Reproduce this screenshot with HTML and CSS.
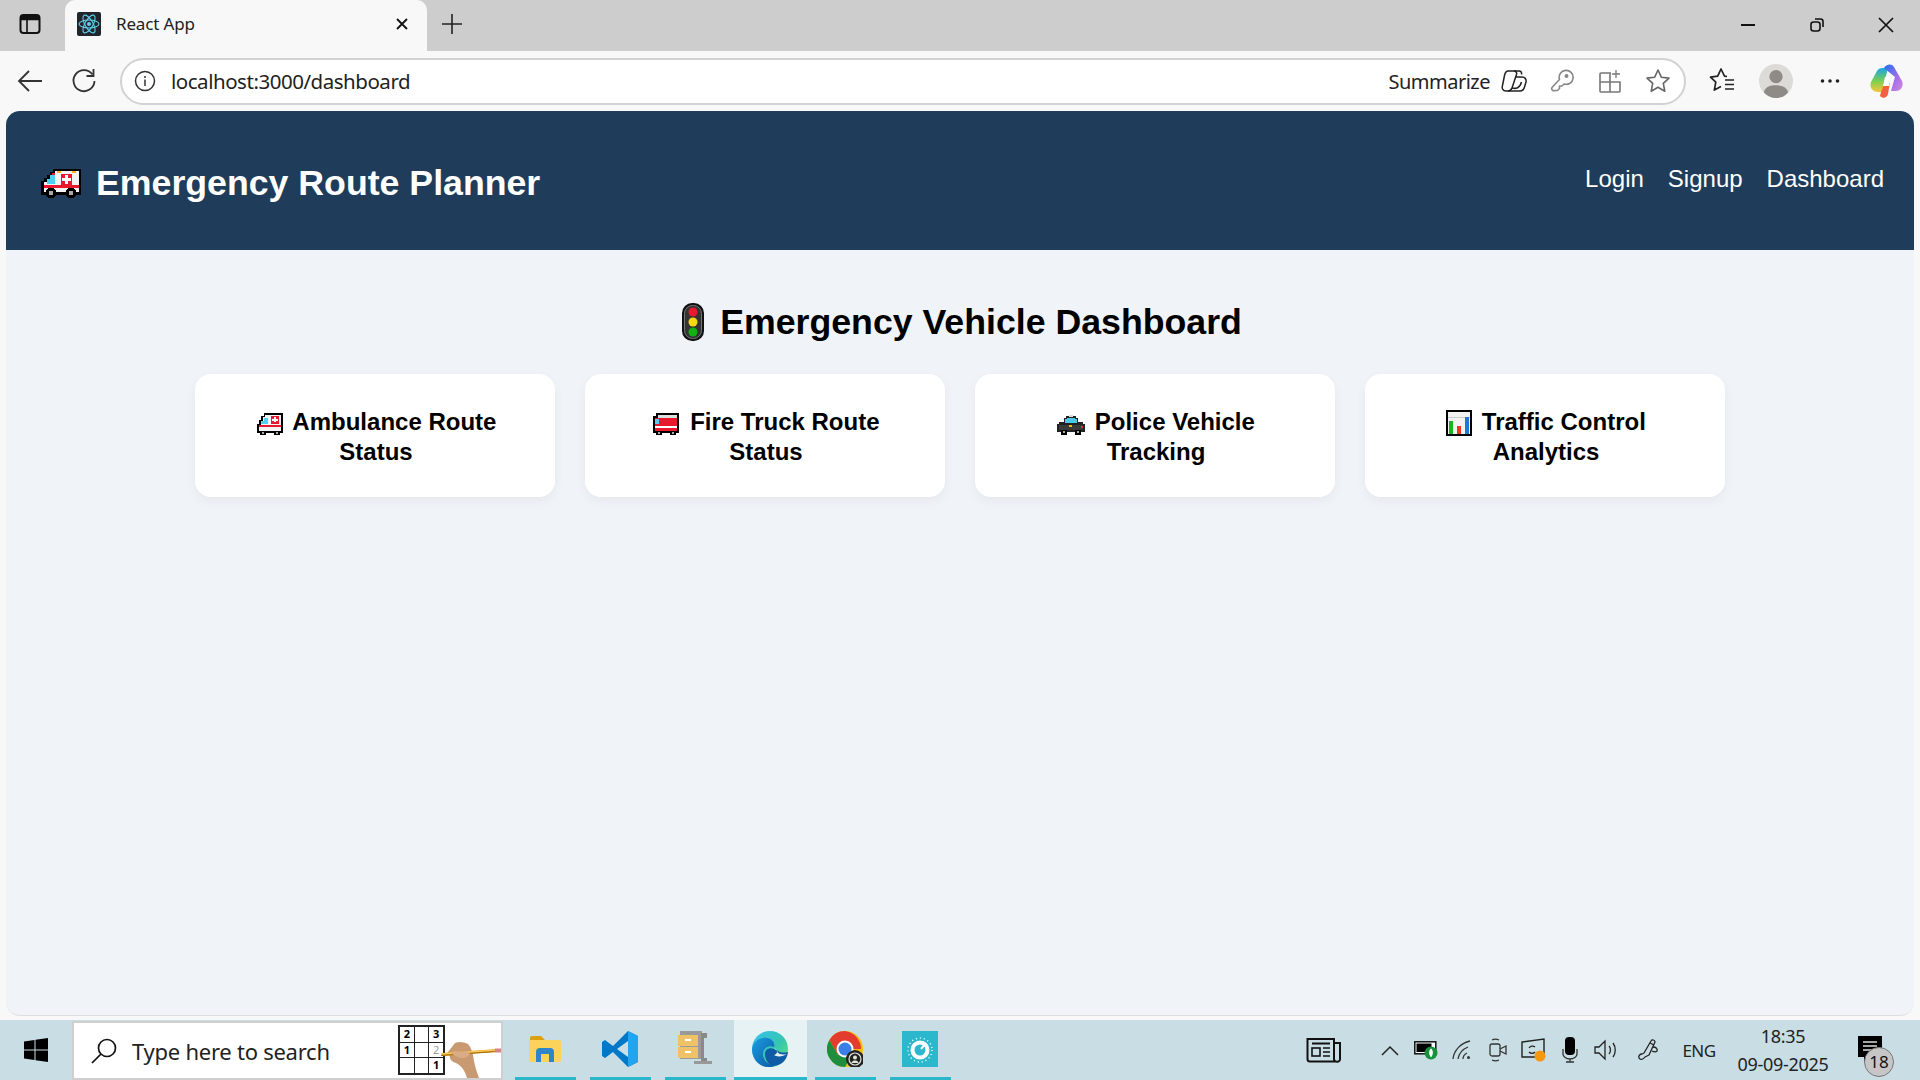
FILE: index.html
```html
<!DOCTYPE html>
<html lang="en">
<head>
<meta charset="utf-8">
<title>React App</title>
<link rel="stylesheet" href="styles.css">
</head>
<body>
<div class="screen">
  <div class="tabstrip">
    <div class="slot panel-slot">
      <svg width="22" height="22" viewBox="0 0 22 22" fill="none" stroke="#111" stroke-width="2"><rect x="1.5" y="2" width="19" height="18" rx="3"/><path d="M2 6.5h18M8 6.5V20" stroke-width="1.6"/><path d="M2 4.5h18" stroke-width="3.5"/></svg>
    </div>
    <div class="tab">
      <svg class="favicon" width="24" height="24" viewBox="0 0 24 24"><rect width="24" height="24" rx="2" fill="#20262b"/><g fill="none" stroke="#5fd0ee" stroke-width="1.1"><ellipse cx="12" cy="12" rx="10" ry="4"/><ellipse cx="12" cy="12" rx="10" ry="4" transform="rotate(60 12 12)"/><ellipse cx="12" cy="12" rx="10" ry="4" transform="rotate(120 12 12)"/></g><circle cx="12" cy="12" r="2" fill="#5fd0ee"/></svg>
      <span class="tab-title">React App</span>
      <svg class="tab-close" width="14" height="14" viewBox="0 0 14 14" stroke="#111" stroke-width="1.8"><path d="M2 2l10 10M12 2L2 12"/></svg>
    </div>
    <div class="slot plus-slot">
      <svg width="22" height="22" viewBox="0 0 22 22" stroke="#222" stroke-width="1.6"><path d="M11 1v20M1 11h20"/></svg>
    </div>
    <div class="winctl">
      <div class="slot ctl"><svg width="16" height="16" viewBox="0 0 16 16" stroke="#111" stroke-width="2"><path d="M1 8h14"/></svg></div>
      <div class="slot ctl"><svg width="16" height="16" viewBox="0 0 16 16" fill="none" stroke="#111" stroke-width="1.6"><rect x="2" y="5" width="9" height="9" rx="2.5"/><path d="M6 2h5.5A2.5 2.5 0 0 1 14 4.500V10"/></svg></div>
      <div class="slot ctl"><svg width="16" height="16" viewBox="0 0 16 16" stroke="#111" stroke-width="1.7"><path d="M1 1l14 14M15 1L1 15"/></svg></div>
    </div>
  </div>

  <div class="toolbar">
    <div class="slot nav-slot">
      <svg width="26" height="24" viewBox="0 0 26 24" fill="none" stroke="#333" stroke-width="1.8"><path d="M25 12H2M12 2L2 12l10 10"/></svg>
    </div>
    <div class="slot nav-slot refresh-slot">
      <svg width="26" height="26" viewBox="0 0 26 26" fill="none" stroke="#333" stroke-width="1.8"><path d="M21.500 6.500A10.500 10.500 0 1 0 23.500 13"/><path d="M22.500 1v7h-7"/></svg>
    </div>
    <div class="address">
      <svg class="info" width="22" height="22" viewBox="0 0 22 22" fill="none" stroke="#333" stroke-width="1.5"><circle cx="11" cy="11" r="9.500"/><path d="M11 9.500v6.500M11 6v2"/></svg>
      <span class="url">localhost:3000/dashboard</span>
      <span class="summ">Summarize</span>
      <div class="slot addr-slot"><svg width="26" height="24" viewBox="0 0 26 24" fill="none" stroke="#222" stroke-width="1.5" stroke-linejoin="round"><path d="M7 2h6c2 0 3 1.500 2.500 3.500L11 19c-.7 2-2 3-4 3H5c-3 0-4.500-2.500-3.500-5.500l2-10C4.200 3.500 5 2 7 2z"/><path d="M13 2h5c2 0 3 1.500 2.500 3.500"/><path d="M14 8h7c3 0 4.500 2.500 4 5l-1.500 5c-.7 2.500-2 4-4.500 4H7"/><path d="M11 19c4 1 8 0 9.500-6"/></svg></div>
      <div class="slot addr-slot"><svg width="24" height="24" viewBox="0 0 24 24" fill="none" stroke="#888" stroke-width="1.6" stroke-linejoin="round"><path d="M9.500 10.500a7 7 0 1 1 4.500 4.500l-2 2h-2.500v2.500l-2 2H5c-2 1-4-1-3-3z"/><circle cx="16.500" cy="7" r="1.200" fill="#888"/></svg></div>
      <div class="slot addr-slot"><svg width="24" height="24" viewBox="0 0 24 24" fill="none" stroke="#777" stroke-width="1.6"><path d="M13 4H3a1 1 0 0 0-1 1v17a1 1 0 0 0 1 1h18a1 1 0 0 0 1-1V13H2M12 4v19"/><path d="M18 1v8M14 5h8" stroke-width="1.3"/></svg></div>
      <div class="slot addr-slot"><svg width="26" height="26" viewBox="0 0 26 26" fill="none" stroke="#666" stroke-width="1.6"><path d="M13 2l3.300 7.200 7.700.9-5.700 5.300 1.500 7.800L13 19.300 6.200 23.200l1.500-7.800L2 10.100l7.700-.9z" stroke-linejoin="round"/></svg></div>
    </div>
    <div class="slot tool-slot"><svg width="26" height="26" viewBox="0 0 26 26" fill="none" stroke="#222" stroke-width="1.7"><path d="M18 8.500l-2.500-.3L12 1l-3.300 7.200-7.200.9 5.300 5-1.500 8L12 18.500" stroke-linejoin="round"/><path d="M16 12h9M16 16.500h9M16 21h9" stroke-width="1.500"/></svg></div>
    <div class="slot tool-slot"><svg width="34" height="34" viewBox="0 0 35 35"><circle cx="17.500" cy="17.500" r="17.500" fill="#dcdbd8"/><circle cx="17.500" cy="13" r="6.800" fill="#8e8a85"/><path d="M5 29c2-6 7-7 12.500-7S28 23 30 29c-3 4-8 6-12.500 6S8 33 5 29z" fill="#8e8a85"/></svg></div>
    <div class="slot tool-slot"><svg width="20" height="6" viewBox="0 0 20 6" fill="#222"><circle cx="2.500" cy="3" r="1.800"/><circle cx="10" cy="3" r="1.800"/><circle cx="17.500" cy="3" r="1.800"/></svg></div>
    <div class="slot tool-slot copilot-slot"><svg width="34" height="36" viewBox="0 0 34 36"><defs><linearGradient id="cpa" x1="0" y1="0" x2="0" y2="1"><stop offset="0" stop-color="#19a5e8"/><stop offset=".55" stop-color="#7ed04d"/><stop offset="1" stop-color="#f6c63a"/></linearGradient><linearGradient id="cpb" x1="0" y1="0" x2="1" y2="1"><stop offset="0" stop-color="#1d6ff0"/><stop offset=".6" stop-color="#a56ee8"/><stop offset="1" stop-color="#d58be0"/></linearGradient></defs><path d="M7 8c2-3 4-3 7-3h4l-6 24H8c-5 0-9-4-7-10z" fill="url(#cpa)"/><path d="M14 5c2-4 8-5 10-1l8 14c2 5-1 10-6 10h-5l4-14z" fill="url(#cpb)"/><path d="M11 29l4-10 5 0-2 12c-1 4-5 5-8 2z" fill="#f2613f"/><path d="M15 14h6l-2 9h-6z" fill="#fff"/></svg></div>
  </div>

  <div class="viewport">
    <header class="app-header">
      <h1 class="brand">
        <svg class="emoji brand-emoji" width="40" height="32" viewBox="0 0 40 32" shape-rendering="crispEdges"><path d="M12 2h28v26H0V14h3v-3h3V8h3V5h3z" fill="#000"/><path d="M14 4h24v21H3V15h3v-3h3V9h3V6h2z" fill="#f3f3f3"/><path d="M9 8h5v9H6v-5h3z" fill="#4fcdf2"/><rect x="11" y="6" width="3" height="2" fill="#e8192c"/><rect x="20" y="7" width="11" height="11" fill="#e8192c"/><path d="M24 8h3v3h3v3h-3v3h-3v-3h-3v-3h3z" fill="#fff"/><rect x="3" y="18" width="35" height="3" fill="#e8192c"/><rect x="16" y="4" width="4" height="2" fill="#f3b51f"/><rect x="31" y="4" width="4" height="2" fill="#f3b51f"/><circle cx="10" cy="26" r="5.500" fill="#000"/><circle cx="10" cy="26" r="2.500" fill="#aaa"/><circle cx="30" cy="26" r="5.500" fill="#000"/><circle cx="30" cy="26" r="2.500" fill="#aaa"/></svg>
        <span>Emergency Route Planner</span>
      </h1>
      <nav class="app-nav">
        <a class="nav-link">Login</a>
        <a class="nav-link">Signup</a>
        <a class="nav-link">Dashboard</a>
      </nav>
    </header>
    <main class="dash">
      <h2 class="dash-title">
        <svg class="emoji light-emoji" width="24" height="40" viewBox="0 0 24 40"><rect x="1" y="1" width="22" height="38" rx="10" fill="#111"/><rect x="3.500" y="3.500" width="17" height="33" rx="8" fill="#333" stroke="#777"/><circle cx="12" cy="10" r="4.500" fill="#e8192c"/><circle cx="12" cy="20" r="4.500" fill="#f6d90f"/><circle cx="12" cy="30" r="4.500" fill="#12b012"/></svg>
        <span>Emergency Vehicle Dashboard</span>
      </h2>
      <div class="cards">
        <article class="card"><h3 class="card-title">
          <svg class="emoji card-emoji" width="28" height="24" viewBox="0 0 28 24" shape-rendering="crispEdges"><path d="M8 1h19v20H1v-9h2V8h2V4h3z" fill="#000"/><path d="M9 3h16v16H3v-6h2V9h2V5h2z" fill="#f4f4f4"/><path d="M8 6h4v6H5V9h3z" fill="#56cfee"/><rect x="15" y="4" width="8" height="8" fill="#e8192c"/><path d="M18 5h2v5h-2zM16 7h6v2h-6z" fill="#fff"/><rect x="3" y="13" width="22" height="2" fill="#e8192c"/><rect x="4" y="19" width="6" height="4" fill="#000"/><rect x="18" y="19" width="6" height="4" fill="#000"/><rect x="6" y="20" width="2" height="2" fill="#aaa"/><rect x="20" y="20" width="2" height="2" fill="#aaa"/></svg>
          Ambulance Route Status</h3></article>
        <article class="card"><h3 class="card-title">
          <svg class="emoji card-emoji" width="28" height="24" viewBox="0 0 28 24" shape-rendering="crispEdges"><path d="M4 1h23v20H1V4h3z" fill="#000"/><rect x="3" y="6" width="22" height="13" fill="#e8192c"/><rect x="6" y="3" width="19" height="3" fill="#ddd"/><rect x="3" y="7" width="4" height="5" fill="#56cfee"/><rect x="3" y="14" width="22" height="2" fill="#fff"/><rect x="4" y="19" width="6" height="4" fill="#000"/><rect x="18" y="19" width="6" height="4" fill="#000"/><rect x="6" y="20" width="2" height="2" fill="#aaa"/><rect x="20" y="20" width="2" height="2" fill="#aaa"/></svg>
          Fire Truck Route Status</h3></article>
        <article class="card"><h3 class="card-title">
          <svg class="emoji card-emoji" width="28" height="22" viewBox="0 0 28 22" shape-rendering="crispEdges"><path d="M9 2h10v2h2v4h5v2h2v8H0v-8h2V8h5V4h2z" fill="#222"/><path d="M10 4h8v1h2v4H8V5h2z" fill="#4fc7ea"/><rect x="12" y="1" width="4" height="2" fill="#ddd"/><rect x="2" y="11" width="24" height="5" fill="#3a3a3a"/><rect x="12" y="11" width="3" height="2" fill="#f3b51f"/><rect x="24" y="12" width="2" height="2" fill="#d33"/><rect x="4" y="16" width="6" height="5" fill="#000"/><rect x="18" y="16" width="6" height="5" fill="#000"/><rect x="6" y="17" width="2" height="2" fill="#aaa"/><rect x="20" y="17" width="2" height="2" fill="#aaa"/></svg>
          Police Vehicle Tracking</h3></article>
        <article class="card"><h3 class="card-title">
          <svg class="emoji card-emoji" width="26" height="26" viewBox="0 0 26 26" shape-rendering="crispEdges"><rect x="0" y="0" width="26" height="26" fill="#000"/><rect x="2" y="2" width="22" height="22" fill="#f2f2f2"/><rect x="2" y="7" width="22" height="1" fill="#ccc"/><rect x="3" y="11" width="4" height="13" fill="#19b51f"/><rect x="11" y="16" width="4" height="8" fill="#ea3a1c"/><rect x="19" y="7" width="4" height="17" fill="#1f78d1"/></svg>
          Traffic Control Analytics</h3></article>
      </div>
    </main>
  </div>

  <div class="taskbar">
    <div class="slot start">
      <svg width="24" height="24" viewBox="0 0 24 24" fill="#000"><path d="M0 3.500l10.500-1.500v9.500H0zM11.500 1.800L24 0v11.500H11.500zM0 12.500h10.500V22L0 20.500zM11.500 12.500H24V24l-12.500-1.800z"/></svg>
    </div>
    <div class="search">
      <svg class="search-icon" width="26" height="26" viewBox="0 0 26 26" fill="none" stroke="#111" stroke-width="1.700"><circle cx="16" cy="10" r="8.500"/><path d="M10 16L1 25"/></svg>
      <span class="search-text">Type here to search</span>
      <div class="sudoku">
        <span class="cell">2</span><span class="cell"></span><span class="cell">3</span>
        <span class="cell">1</span><span class="cell"></span><span class="cell cell-pencil">2</span>
        <span class="cell"></span><span class="cell"></span><span class="cell">1</span>
      </div>
      <svg class="hand" width="62" height="40" viewBox="0 0 62 40"><path d="M7 12l7-9c4-2 9-1 13 1 3 3 4 7 5 11 1 8 3 15 6 23H26c-2-7-5-12-11-15-3-1-5-2-6-5 0-2-2-4-2-6z" fill="#c99a72"/><path d="M0 13L55 9l0 3L1 16z" fill="#f2a81d"/><path d="M0 14l55-4" stroke="#f9cf6a" stroke-width="1"/><path d="M0 15.500L55 11.500" stroke="#9a6a10" stroke-width="1"/><rect x="54" y="8.500" width="6" height="4" fill="#d8848a"/><path d="M10 13c3 2 7 5 12 5 3 0 5-2 7-4l-2-3c-4 1-9 1-13 0z" fill="#d9ac86"/></svg>
    </div>
    <div class="tb-item">
      <svg width="32" height="26" viewBox="0 0 32 26"><path d="M1 2a2 2 0 0 1 2-2h9l4 4H1z" fill="#dea00b"/><path d="M0 4h30a2 2 0 0 1 2 2v18a2 2 0 0 1-2 2H2a2 2 0 0 1-2-2z" fill="#fbd35b"/><path d="M7 16a4 4 0 0 1 4-4h10a4 4 0 0 1 4 4v10h-5v-8h-8v8H7z" fill="#2f85c9"/></svg>
    </div>
    <div class="tb-item">
      <svg width="36" height="36" viewBox="0 0 36 36"><path d="M26 0l10 5v26l-10 5L11 21 3 27l-3-2V11l3-2 8 6z" fill="#0078c8"/><path d="M26 0l10 5v26l-10 5z" fill="#22a5f1"/><path d="M26 10L15 18l11 8z" fill="#cbdee4"/></svg>
    </div>
    <div class="tb-item">
      <svg width="36" height="38" viewBox="0 0 36 38"><rect x="3" y="1" width="22" height="28" fill="#9a9a9a"/><rect x="1" y="5" width="20" height="11" fill="#efc267"/><rect x="1" y="17" width="20" height="11" fill="#efc267"/><rect x="8" y="9" width="6" height="2" fill="#fff"/><rect x="8" y="21" width="6" height="2" fill="#fff"/><path d="M24 3h6v5h-3v20h3v3h-6z" fill="#8a8a8a"/><rect x="17" y="31" width="18" height="3" fill="#999"/></svg>
    </div>
    <div class="tb-item tb-active">
      <svg width="36" height="36" viewBox="0 0 36 36"><defs><linearGradient id="eda" x1="0" y1="0" x2="1" y2="1"><stop offset="0" stop-color="#35c1f1"/><stop offset=".55" stop-color="#36c6b0"/><stop offset="1" stop-color="#66eb6e"/></linearGradient><linearGradient id="edb" x1="0" y1="0" x2="1" y2="1"><stop offset="0" stop-color="#1b9de2"/><stop offset="1" stop-color="#0c59a4"/></linearGradient></defs><circle cx="18" cy="18" r="18" fill="url(#eda)"/><path d="M0 18C1 10 8 6 15 7c7 1 8 7 7 9-4-2-11 0-11 7 0 6 5 11 12 12-3 1-5 1-7 1C7 36 0 28 0 18z" fill="url(#edb)"/><path d="M13 23c0-5 5-7 9-5 4 1 5 5 14 3-1 9-8 14-15 14-5-1-8-7-8-12z" fill="#0f5ba6"/><path d="M22 17c4 2 4 6 0 7 2 2 9 2 13-1-3 1-9 1-10-3z" fill="#e7f2f5"/></svg>
    </div>
    <div class="tb-item">
      <svg width="36" height="36" viewBox="0 0 36 36"><circle cx="18" cy="18" r="18" fill="#fbbc04"/><path d="M18 0A18 18 0 0 0 2.400 9L11 24l7-6h16a18 18 0 0 0-1-6A18 18 0 0 0 18 0z" fill="#e33b2e"/><path d="M2.400 9A18 18 0 0 0 18 36l8-14-15 2z" fill="#1e8e3e"/><circle cx="18" cy="18" r="8.500" fill="#fff"/><circle cx="18" cy="18" r="6.500" fill="#3a7fe8"/><circle cx="28" cy="28" r="9" fill="#222"/><circle cx="28" cy="28" r="6" fill="none" stroke="#dfe6d8" stroke-width="1.200"/><circle cx="28" cy="26.500" r="2" fill="#dfe6d8"/><path d="M24.500 32c.5-2 2-2.500 3.500-2.500s3 .5 3.500 2.500z" fill="#dfe6d8"/></svg>
    </div>
    <div class="tb-item">
      <svg width="36" height="36" viewBox="0 0 36 36"><rect width="36" height="36" fill="#2bb8cd"/><circle cx="18" cy="19" r="7.500" fill="none" stroke="#fff" stroke-width="4"/><path d="M19 18l5-6" stroke="#fff" stroke-width="2"/><circle cx="18" cy="19" r="12" fill="none" stroke="#fff" stroke-width="1.500" stroke-dasharray="1 3"/></svg>
    </div>
    <div class="tray">
      <div class="slot news"><svg width="36" height="26" viewBox="0 0 36 26" fill="none" stroke="#111" stroke-width="2"><path d="M2 2h26v20a2.500 2.500 0 0 0 2.500 2.500H4A2.500 2.500 0 0 1 1.500 22V2zM28 6h6v16a2.500 2.500 0 0 1-3.500 2.500"/><path d="M6 6.500h18"/><rect x="6" y="11" width="8" height="8" stroke-width="1.600"/><path d="M17 11h7M17 15h7M17 19h7" stroke-width="1.600"/></svg></div>
      <div class="slot tray-slot"><svg width="18" height="11" viewBox="0 0 18 11" fill="none" stroke="#222" stroke-width="1.500"><path d="M1 10l8-8 8 8"/></svg></div>
      <div class="slot tray-slot"><svg width="24" height="20" viewBox="0 0 24 20"><rect x="0.800" y="1.800" width="21" height="12" fill="#fff" stroke="#111" stroke-width="1.500"/><rect x="2.500" y="3.500" width="15" height="8.500" fill="#000"/><circle cx="17" cy="13" r="6.500" fill="#16923c"/><path d="M17 8.500c2.500 2 2.500 6 0 9-2.500-3-2.500-7 0-9z" fill="#fff"/></svg></div>
      <div class="slot tray-slot"><svg width="20" height="20" viewBox="0 0 20 20" fill="none" stroke="#333" stroke-width="1.300"><path d="M1 19C2 10 9 3 18 1M6 19c1-6 5-10 10-12M11 19c0-3 2-5 4-6"/><circle cx="16.500" cy="17.500" r="1.500" fill="#333" stroke="none"/></svg></div>
      <div class="slot tray-slot"><svg width="18" height="24" viewBox="0 0 18 24" fill="none" stroke="#333" stroke-width="1.300"><rect x="1" y="6" width="10" height="12" rx="2"/><path d="M11 11l6-3v8l-6-3M3 2c2-1 5-1 7 0M3 22c2 1 5 1 7 0"/></svg></div>
      <div class="slot tray-slot"><svg width="26" height="24" viewBox="0 0 26 24"><path d="M1 4l22-3v18H1z" fill="none" stroke="#222" stroke-width="1.400"/><path d="M8 10a4 4 0 0 1 6-1M14 14a4 4 0 0 1-6 0" fill="none" stroke="#222" stroke-width="1.200"/><circle cx="19" cy="18" r="5.500" fill="#f7970e"/></svg></div>
      <div class="slot tray-slot"><svg width="16" height="26" viewBox="0 0 16 26"><rect x="3" y="0" width="10" height="18" rx="4" fill="#000"/><path d="M1 12v5a7 5 0 0 0 14 0v-5M8 22v3M4 25h8" fill="none" stroke="#333" stroke-width="1.300"/></svg></div>
      <div class="slot tray-slot"><svg width="24" height="22" viewBox="0 0 24 22" fill="none" stroke="#222" stroke-width="1.300"><path d="M1 8v6h4l6 6V2L5 8zM15 7c2 2 2 6 0 8M19 4c3 4 3 10 0 14"/></svg></div>
      <div class="slot tray-slot pen"><svg width="22" height="24" viewBox="0 0 22 24" fill="none" stroke="#222" stroke-width="1.300" stroke-linejoin="round"><path d="M7 15L14 3c1-2 4-1 4 1l-6 13-4 2c-2 3-5 3-6 1s1-4 3-4z"/><path d="M13 5l4 2M16 9c3 0 5 2 4 4-1 1-3 1-5 0"/></svg></div>
      <span class="eng">ENG</span>
      <div class="clock"><span>18:35</span><span>09-09-2025</span></div>
      <div class="slot notif">
        <svg width="26" height="30" viewBox="0 0 26 30"><path d="M1 1h24v21H13l-6 6v-6H1z" fill="#000"/><path d="M6 7h14M6 11h14M6 15h14" stroke="#ddd" stroke-width="1.300"/></svg>
        <span class="badge">18</span>
      </div>
    </div>
  </div>
</div>
</body>
</html>
```

FILE: styles.css
```css
* { box-sizing: border-box; }
html, body { margin: 0; padding: 0; }
body { font-family: "Liberation Sans", Arial, sans-serif; }
svg { display: block; flex: none; }

.screen { width: 1920px; height: 1080px; display: flex; flex-direction: column; overflow: hidden; background: #f8f8f8; }
.slot { display: flex; align-items: center; justify-content: center; flex: none; position: relative; }

/* tab strip */
.tabstrip { height: 51px; flex: none; background: #cdcdcd; display: flex; align-items: stretch; }
.tabstrip > .slot { padding-bottom: 4px; }
.panel-slot { width: 60px; margin-right: 5px; }
.tab { width: 362px; background: #f8f8f8; border-radius: 10px 10px 0 0; display: flex; align-items: center; padding: 0 18px 4px 12px; font-family: "Noto Sans", sans-serif; }
.favicon { margin-right: 15px; }
.tab-title { flex: 1; font-size: 17px; letter-spacing: -0.15px; color: #222; }
.plus-slot { width: 50px; }
.winctl { margin-left: auto; display: flex; }
.ctl { width: 69px; padding-bottom: 2px; display: flex; align-items: center; justify-content: center; }

/* toolbar */
.toolbar { height: 60px; flex: none; background: #f8f8f8; display: flex; align-items: center; padding-left: 12px; font-family: "Noto Sans", sans-serif; }
.nav-slot { width: 36px; height: 36px; }
.refresh-slot { margin-left: 18px; }
.address { margin-left: 18px; width: 1566px; height: 47px; border: 2px solid #d2d2d2; border-radius: 24px; background: #fff; display: flex; align-items: center; padding: 0 2px 0 12px; }
.info { margin-right: 15px; }
.url { flex: 1; font-size: 20.5px; letter-spacing: -0.47px; color: #222; }
.summ { font-size: 20px; letter-spacing: -0.5px; color: #222; }
.addr-slot { width: 48px; height: 36px; }
.tool-slot { width: 54px; height: 48px; }
.address + .tool-slot { margin-left: 9px; }
.copilot-slot { margin-left: 3px; }

/* page */
.viewport { height: 905px; flex: none; margin: 0 6px; background: #f0f4f8; border-radius: 14px; border-bottom: 1px solid #dedede; overflow: hidden; }
.app-header { height: 139px; background: #1f3d5a; color: #fff; display: flex; align-items: center; justify-content: space-between; padding: 0 30px; }
.brand { margin: 4px 0 0; font-size: 35.7px; font-weight: 700; line-height: 42px; display: flex; align-items: center; }
.brand-emoji { margin: 0 15px 0 5px; }
.app-nav { display: flex; gap: 24px; margin-top: -3px; }
.nav-link { font-size: 24px; color: #fff; }

.dash { padding: 50px 0 0 3px; }
.dash-title { margin: 0; font-size: 35.7px; line-height: 44px; font-weight: 700; color: #000; display: flex; align-items: center; justify-content: center; }
.light-emoji { margin-right: 15px; }
.cards { margin: 30px 0 0 -3px; display: grid; grid-template-columns: repeat(4, 360px); gap: 30px; justify-content: center; }
.card { height: 123px; background: #fff; border-radius: 16px; box-shadow: 0 4px 12px rgba(0, 0, 0, 0.05); padding: 33px 49px 0 51px; }
.card-title { margin: 0; font-size: 24px; line-height: 30px; font-weight: 700; color: #000; text-align: center; }
.card-emoji { display: inline-block; vertical-align: -6px; margin-right: 3px; }

/* taskbar */
.taskbar { height: 60px; margin-top: 4px; flex: none; background: #c9dee4; display: flex; align-items: stretch; font-family: "Noto Sans", sans-serif; }
.start { width: 72px; }
.search { width: 431px; height: 59px; margin-top: 1px; margin-right: 5px; background: #fff; border: 2px solid #cfcfcf; display: flex; align-items: center; padding-left: 17px; position: relative; }
.search-icon { margin-right: 15px; }
.search-text { font-size: 22px; letter-spacing: -0.25px; color: #222; }
.sudoku { position: absolute; left: 324px; top: 2px; width: 47px; height: 50px; display: grid; grid-template-columns: repeat(3, 1fr); grid-template-rows: repeat(3, 1fr); border: 2px solid #222; gap: 1px; background: #222; }
.cell { background: #fff; font-size: 11px; font-weight: 700; line-height: 14px; text-align: center; color: #000; }
.cell-pencil { color: #999; font-weight: 400; }
.hand { position: absolute; left: 367px; top: 17px; }
.tb-item { width: 61px; margin: 0 7px; border-bottom: 3px solid #2ab7ca; display: flex; align-items: center; justify-content: center; padding-right: 2px; }
.tb-active { width: 73px; margin: 0 1px; background: #e7f2f5; }
.tray { margin-left: auto; display: flex; align-items: center; padding-right: 23px; color: #222; }
.news { width: 48px; margin-right: 24px; }
.tray-slot { width: 36px; }
.pen { margin-left: 6px; }
.eng { width: 48px; margin-left: 9px; text-align: center; font-size: 17px; letter-spacing: -0.5px; }
.clock { width: 120px; display: flex; flex-direction: column; align-items: center; font-size: 18px; line-height: 28px; letter-spacing: -0.3px; }
.notif { width: 54px; }
.badge { position: absolute; right: 3px; top: 12px; width: 30px; height: 30px; border-radius: 50%; background: #c6c6c6; border: 1px solid #777; font-size: 17px; line-height: 28px; text-align: center; color: #111; }
```
